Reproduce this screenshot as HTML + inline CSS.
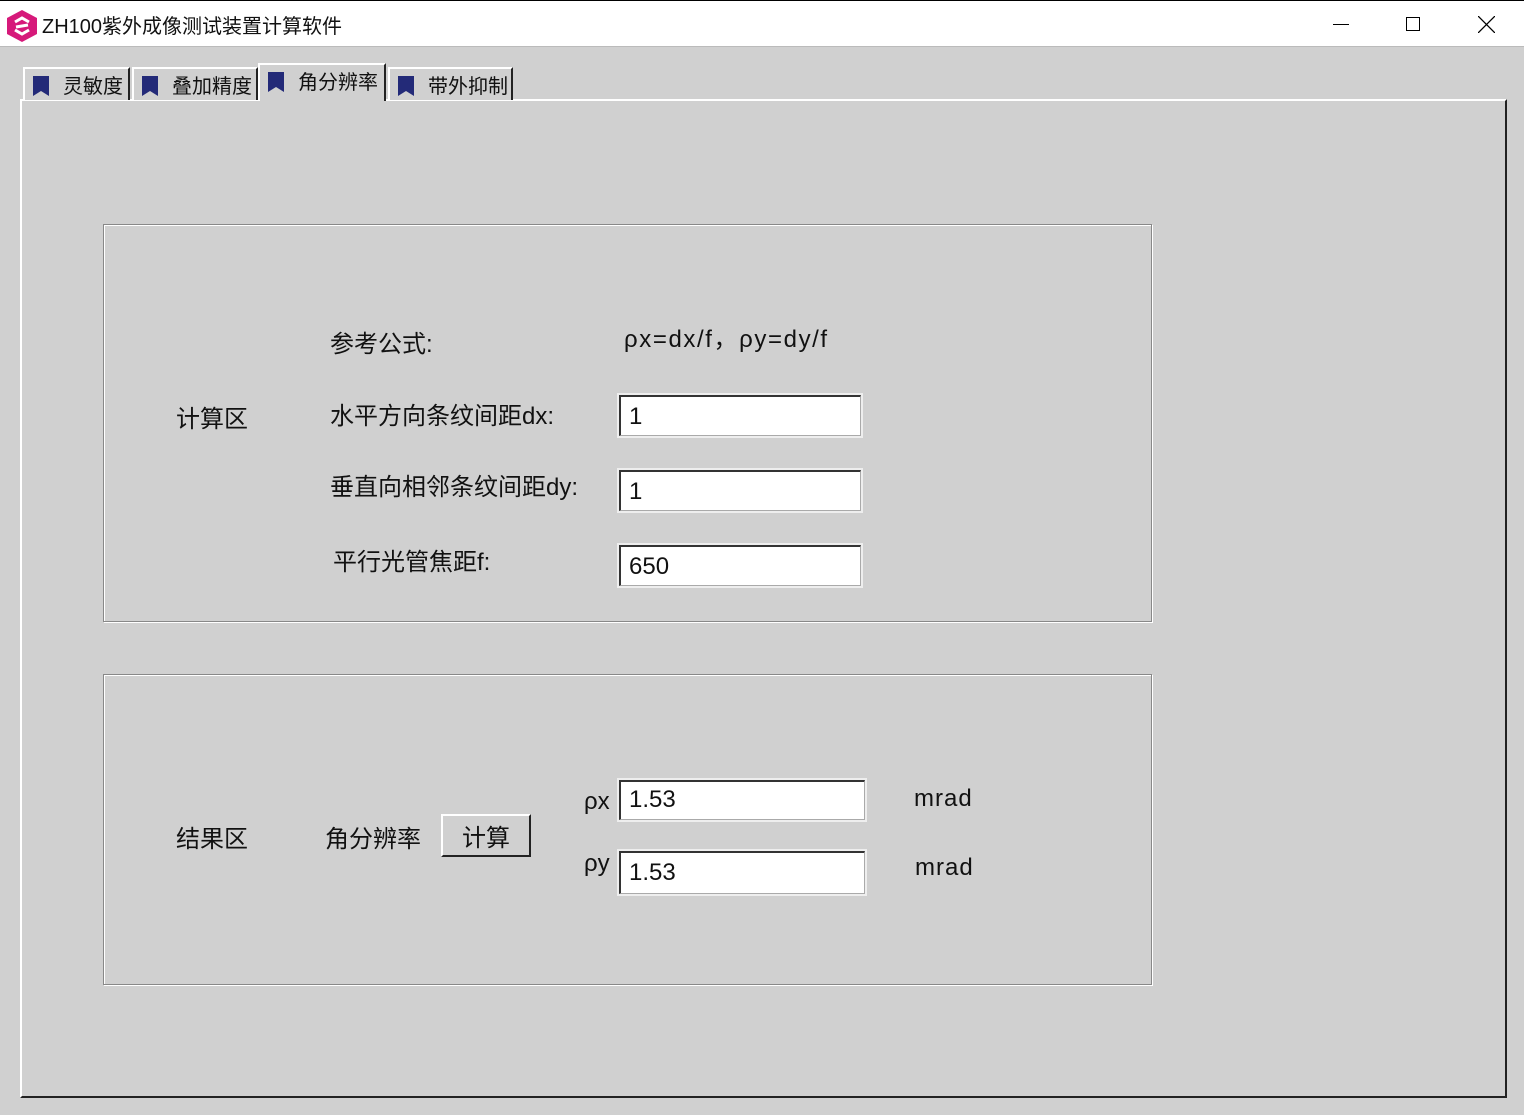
<!DOCTYPE html>
<html><head><meta charset="utf-8"><style>
*{margin:0;padding:0;box-sizing:border-box}
body{width:1524px;height:1115px;background:#d0d0d0;position:relative;overflow:hidden;font-family:"Liberation Sans","Noto Sans CJK SC",sans-serif;color:#111}
.a{position:absolute}
#title{left:0;top:0;width:1524px;height:47px;background:#fff;border-top:1px solid #000;border-bottom:1px solid #bbb}
.t{font-size:24px;white-space:nowrap}
.tab{top:67px;height:33px;border-top:2px solid #fff;border-left:2px solid #fff;border-right:2px solid #222;background:#d0d0d0;font-size:20px;padding:1px 0 0 8px}
.bm{display:inline-block;width:16px;height:20px;background:#232a78;vertical-align:-3px;margin-right:14px;clip-path:polygon(0 0,100% 0,100% 100%,50% 75%,0 100%);outline:3px solid #fff}
.grp{border:1px solid #888;box-shadow:1px 1px 0 #fff, inset 1px 1px 0 #fff}
.in{background:#fff;border-top:2px solid #333;border-left:2px solid #333;border-right:1px solid #aaa;border-bottom:1px solid #aaa;font-size:24px;padding:6px 0 0 8px;outline:2px solid #eee}
</style></head><body>
<div id="title" class="a">
 <svg class="a" style="left:7px;top:9px" width="30" height="32" viewBox="0 0 30 32"><polygon points="15,0 30,8 30,24 15,32 0,24 0,8" fill="#d6197a"/><path d="M8 12 L15 8 L22 12 M22 20 L15 24 L8 20 M9 17 L21 15" stroke="#fff" stroke-width="3" fill="none"/></svg>
 <div class="a t" style="left:42px;top:9px;font-size:20px">ZH100紫外成像测试装置计算软件</div>
 <div class="a" style="left:1333px;top:23px;width:16px;height:1px;background:#000"></div>
 <div class="a" style="left:1406px;top:16px;width:14px;height:14px;border:1px solid #000"></div>
 <svg class="a" style="left:1478px;top:15px" width="17" height="17"><path d="M0 0L17 17M17 0L0 17" stroke="#000" stroke-width="1.3"/></svg>
</div>
<div class="a" style="left:20px;top:99px;width:1487px;height:999px;border-top:2px solid #fff;border-left:2px solid #fff;border-right:2px solid #222;border-bottom:2px solid #222"></div>
<div class="a tab" style="left:23px;width:107px"><span class="bm"></span>灵敏度</div>
<div class="a tab" style="left:132px;width:126px"><span class="bm"></span>叠加精度</div>
<div class="a tab" style="left:258px;top:63px;height:38px;width:128px;border-bottom:none"><span class="bm"></span>角分辨率</div>
<div class="a tab" style="left:388px;width:125px"><span class="bm"></span>带外抑制</div>
<div class="a grp" style="left:103px;top:224px;width:1049px;height:398px"></div>
<div class="a grp" style="left:103px;top:674px;width:1049px;height:311px"></div>
<div class="a t" style="left:176px;top:399px">计算区</div>
<div class="a t" style="left:330px;top:324px">参考公式:</div>
<div class="a t" style="left:624px;top:319px;letter-spacing:1.6px">ρx=dx/f，ρy=dy/f</div>
<div class="a t" style="left:330px;top:396px">水平方向条纹间距dx:</div>
<div class="a t" style="left:330px;top:467px">垂直向相邻条纹间距dy:</div>
<div class="a t" style="left:333px;top:542px">平行光管焦距f:</div>
<div class="a in" style="left:619px;top:395px;width:242px;height:41px">1</div>
<div class="a in" style="left:619px;top:470px;width:242px;height:41px">1</div>
<div class="a in" style="left:619px;top:545px;width:242px;height:41px">650</div>
<div class="a t" style="left:176px;top:819px">结果区</div>
<div class="a t" style="left:325px;top:819px">角分辨率</div>
<div class="a t" style="left:441px;top:814px;width:90px;height:43px;border-top:2px solid #fff;border-left:2px solid #fff;border-right:2px solid #222;border-bottom:2px solid #222;text-align:center;padding-top:2px">计算</div>
<div class="a t" style="left:584px;top:788px">ρx</div>
<div class="a t" style="left:584px;top:850px">ρy</div>
<div class="a in" style="left:619px;top:780px;width:246px;height:40px;padding-top:4px">1.53</div>
<div class="a in" style="left:619px;top:851px;width:246px;height:43px;padding-top:6px">1.53</div>
<div class="a t" style="left:914px;top:785px;letter-spacing:1px">mrad</div>
<div class="a t" style="left:915px;top:854px;letter-spacing:1px">mrad</div>
</body></html>
